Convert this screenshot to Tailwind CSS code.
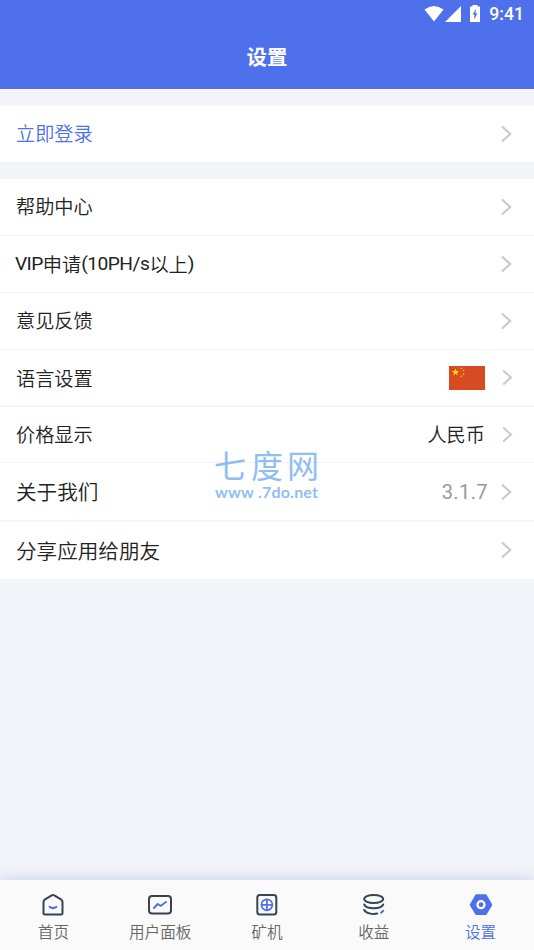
<!DOCTYPE html>
<html lang="zh-CN">
<head>
<meta charset="utf-8">
<title>设置</title>
<script src="https://cdn.jsdelivr.net/npm/@tailwindcss/browser@4"></script>
</head>
<body class="relative flex h-[950px] w-[534px] flex-col overflow-hidden bg-[#f3f4f9] font-['Noto_Sans_CJK_SC',sans-serif] text-[19.2px] leading-7 font-[350] text-[#222]">
<svg class="hidden"><symbol id="chev" viewBox="0 0 12 18"><path d="M2 1.500 10.200 9 2 16.500" fill="none" stroke="#cacaca" stroke-width="2.200"/></symbol></svg>
<header class="flex h-[89px] shrink-0 flex-col bg-[#4e70eb] text-white">
  <div class="flex h-[27px] items-center justify-end pr-[10px]">
    <svg class="mr-[5px] h-[18px] w-[61px]" viewBox="0 0 61 18" fill="#fff"><path d="M1.500 4.500Q11 -2.500 20.500 4.500L11 16.500Z"/><path d="M38 1v16H22Z"/><path d="M49.500 0h5v1.500h2.500V17h-10V1.500h2.500Z"/><path d="m53.200 4-3.700 5.500h2l-.6 5 3.600-6h-2Z" fill="#4e70eb"/></svg>
    <span class="mt-px font-[Roboto,sans-serif] text-[17.600px] font-medium leading-[27px]">9:41</span>
  </div>
  <h1 class="text-center text-[20.5px] font-bold leading-[59px]">设置</h1>
</header>
<main class="flex flex-col">
  <section class="mt-[17px] flex h-14 items-center justify-between bg-white pr-[22px] pb-px pl-4 text-[#4e70eb]"><span class="-mt-px">立即登录</span><svg class="mt-px h-[18px] w-3"><use href="#chev"/></svg></section>
  <section class="mt-[17px]">
    <div class="flex h-[57px] items-center justify-between border-b border-[#f1f2f7] bg-white pr-[22px] pl-4"><span class="-mt-0.5">帮助中心</span><svg class="h-[18px] w-3"><use href="#chev"/></svg></div>
    <div class="flex h-[57px] items-center justify-between border-b border-[#f1f2f7] bg-white pr-[22px] pl-[15px]"><span class="-mt-px flex items-center"><span class="font-[Roboto,sans-serif] font-normal tracking-[-0.6px]">VIP</span>申请<span class="font-[Roboto,sans-serif] font-normal tracking-[-0.5px]">(10PH/s</span>以上<span class="font-[Roboto,sans-serif] font-normal">)</span></span><svg class="h-[18px] w-3"><use href="#chev"/></svg></div>
    <div class="flex h-[57px] items-center justify-between border-b border-[#f1f2f7] bg-white pr-[22px] pl-4"><span class="-mt-0.5">意见反馈</span><svg class="h-[18px] w-3"><use href="#chev"/></svg></div>
    <div class="flex h-[57px] items-center border-b-2 border-[#f3f4f9] bg-white pr-[21px] pl-4"><span class="mr-auto">语言设置</span>
      <svg class="mr-4 h-6 w-9" viewBox="0 0 36 24"><path fill="#d84b22" d="M0 0h36v24H0z"/><path d="m6.500 2.500 1 2.600h2.700L8 6.800l.8 2.600-2.300-1.600-2.300 1.600L5 6.800 2.800 5.100h2.700Z" fill="#ffdc00"/><g fill="#f2b51b"><path d="m12 1.200 1.300 1-1.100 1.200-1-1ZM14.500 3.400l1.200 1-1.100 1.200-1-1ZM14.500 7l1.200 1-1.100 1.200-1-1ZM12 9.300l1.300 1-1.100 1.200-1-1Z"/></g></svg>
      <svg class="h-[17px] w-3"><use href="#chev"/></svg></div>
    <div class="flex h-14 items-center border-b border-[#f1f2f7] bg-white pr-[21px] pb-px pl-4"><span class="mr-auto">价格显示</span><span class="mr-4">人民币</span><svg class="h-[17px] w-3"><use href="#chev"/></svg></div>
    <div class="flex h-[59px] items-center border-b-2 border-[#f3f4f9] bg-white pr-[22px] pl-4 text-[20.6px]"><span class="-mt-0.5 mr-auto">关于我们</span><span class="mr-[12px] font-[Roboto,sans-serif] text-[20px] font-normal tracking-[0.4px] text-[#999]">3.1.7</span><svg class="h-[18px] w-3"><use href="#chev"/></svg></div>
    <div class="flex h-[57px] items-center justify-between bg-white pr-[22px] pb-px pl-4 text-[20.6px]"><span class="-mt-px">分享应用给朋友</span><svg class="h-[18px] w-3"><use href="#chev"/></svg></div>
  </section>
</main>
<svg class="absolute top-[435px] left-[210px] h-[75px] w-[120px]" viewBox="0 0 120 75" fill="#8fbef3"><text x="4 41 77" y="43" font-family="Noto Sans CJK SC" font-weight="400" font-size="32">七度网</text><text x="5" y="62.500" textLength="103" lengthAdjust="spacing" font-family="Lato" font-weight="700" font-size="16">www .7do.net</text></svg>
<nav class="mt-auto grid h-[70px] shrink-0 grid-cols-5 bg-[#fafafa] text-[15.6px] leading-[26px] text-[#666] shadow-[0_-2px_12px_rgba(78,112,200,0.23)]">
  <div class="flex flex-col items-center pt-3"><svg class="h-[26px] w-[26px]" viewBox="0 0 26 26" fill="none" stroke="#36454f" stroke-width="2"><path d="M3.500 10q0-1.500 1.200-2.400l7-4.300q1.300-.8 2.600 0l7 4.300q1.200.9 1.200 2.400v11q0 1.500-1.500 1.500h-16q-1.500 0-1.500-1.500Z"/><path d="M9.500 14.800q3.500 2.700 7 0" stroke="#4e70eb" stroke-linecap="round"/></svg><span>首页</span></div>
  <div class="flex flex-col items-center pt-3"><svg class="h-[26px] w-[26px]" viewBox="0 0 26 26" fill="none" stroke="#36454f" stroke-width="2"><rect x="2" y="4" width="22" height="17.500" rx="3"/><path d="m7 16 3.700-4 3.200 1.800L19 10" stroke="#4e70eb" stroke-linecap="round" stroke-linejoin="round"/></svg><span>用户面板</span></div>
  <div class="flex flex-col items-center pt-3"><svg class="h-[26px] w-[26px]" viewBox="0 0 26 26" fill="none" stroke="#36454f" stroke-width="2"><rect x="3.300" y="3" width="19" height="19.500" rx="2.500"/><g stroke="#4e70eb" stroke-width="1.700"><circle cx="12.900" cy="12.800" r="5.500"/><path d="M12.900 7v11.600M7 12.800h11.800"/></g></svg><span>矿机</span></div>
  <div class="flex flex-col items-center pt-3"><svg class="h-[26px] w-[26px]" viewBox="0 0 26 26" fill="none" stroke="#36454f" stroke-width="2" stroke-linecap="round"><ellipse cx="12.700" cy="7" rx="9.500" ry="4"/><path d="M3.200 12.500c2.500 5 16.500 5 19 0M3.200 18c1.600 3.300 8 4.500 13 3.600"/><path d="m20 20.700 2.200-2" stroke="#4e70eb"/></svg><span>收益</span></div>
  <div class="flex flex-col items-center pt-3 text-[#4e70eb]"><svg class="h-[26px] w-[26px]" viewBox="0 0 26 26"><path d="M8.500 3.500h9l5.500 9.300-5.500 9h-9L3 12.800Z" fill="#4e70eb" stroke="#4e70eb" stroke-width="2.500" stroke-linejoin="round"/><circle cx="13" cy="12.700" r="3.500" fill="none" stroke="#fff" stroke-width="2.200"/></svg><span>设置</span></div>
</nav>
</body>
</html>
